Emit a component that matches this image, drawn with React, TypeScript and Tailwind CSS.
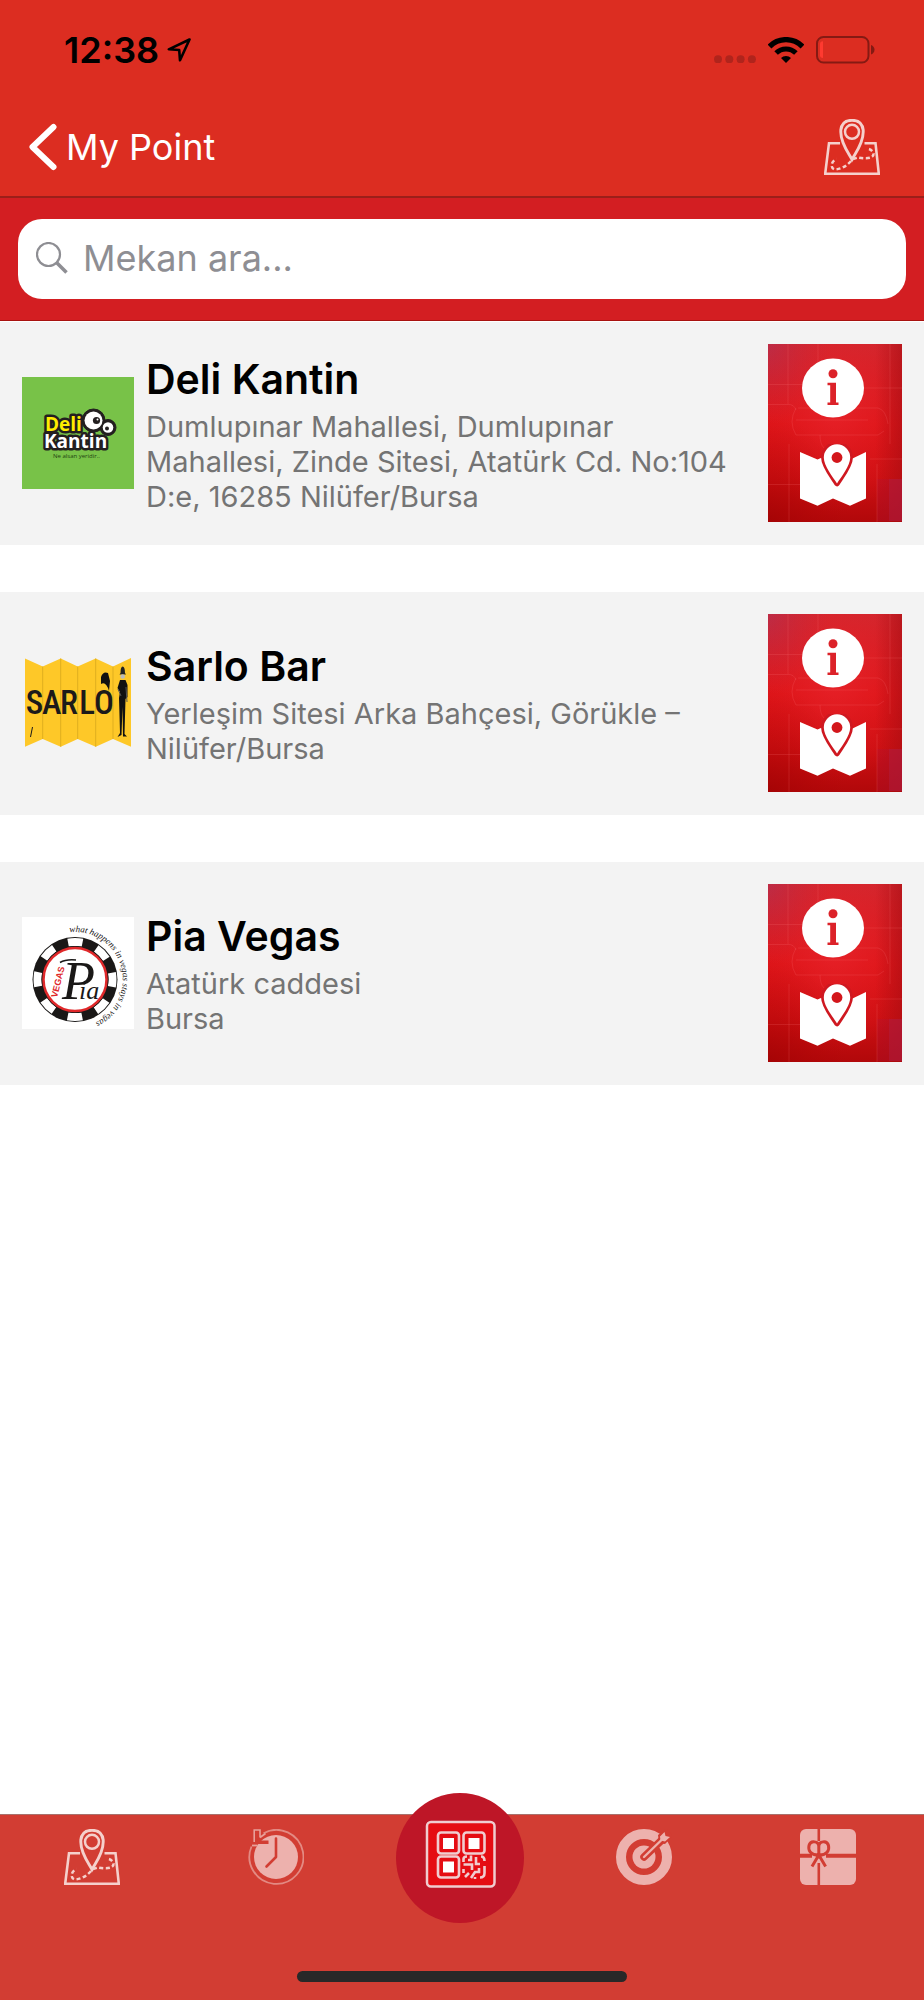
import React from "react";

function LocationArrow() {
  return (
    <svg className="h-6 w-6" viewBox="0 0 24 24" fill="none" stroke="#000" strokeWidth="2.6" strokeLinejoin="round" aria-hidden="true">
      <path d="M22.5 1.5 1.8 11.3 12.2 12 13 22.3Z" />
    </svg>
  );
}

function SignalDots() {
  return (
    <svg className="h-[26px] w-[42px]" viewBox="0 0 42 26" fill="#b0241c" aria-hidden="true">
      <circle cx="4" cy="22.3" r="4" />
      <circle cx="15.3" cy="22.3" r="4" />
      <circle cx="26.6" cy="22.3" r="4" />
      <circle cx="37.9" cy="22.3" r="4" />
    </svg>
  );
}

function Wifi() {
  return (
    <svg className="h-[26px] w-9" viewBox="0 0 36 26" fill="none" stroke="#000" aria-hidden="true">
      <path d="M1.5 9.5A23.3 23.3 0 0 1 34.5 9.5" strokeWidth="5.4" />
      <path d="M8.1 16.1A14 14 0 0 1 27.9 16.1" strokeWidth="5" />
      <path d="M18 26 13 21A7 7 0 0 1 23 21Z" fill="#000" stroke="none" />
    </svg>
  );
}

function Battery() {
  return (
    <svg className="h-7 w-[60px]" viewBox="0 0 60 28" aria-hidden="true">
      <rect x="1" y="1" width="51.5" height="25.5" rx="6.5" fill="none" stroke="#851a13" strokeWidth="2" />
      <path d="M4 8Q4 5.5 7 5.2V22Q4 21.7 4 19.5Z" fill="#ff3a30" />
      <path d="M55 9Q58.5 10.5 58.5 13.7T55 18.5Z" fill="#851a13" />
    </svg>
  );
}

function MapIcon() {
  return (
    <svg className="h-14 w-14" viewBox="0 0 56 56" fill="none" stroke="#f5d0cc" aria-hidden="true">
      <path d="M16 24.2H5L1.2 54.7H54.8L51.5 24.2H40.500" strokeWidth="2.6" />
      <path d="M28 40.500C24.500 34 16.800 24.500 16.800 13V11Q18 1.300 28 1.300T39.200 11V13C39.200 24.500 31.500 34 28 40.500Z" strokeWidth="2.900" />
      <circle cx="28" cy="12.800" r="7" strokeWidth="2.500" />
      <path d="M27 42C22 48 16 50 11.500 50.500C6 50 6.500 42.500 12.500 40" strokeWidth="2.500" strokeDasharray="4 2.500" />
      <path d="M29 40 34 38.500C40 39.500 50 40.500 49.500 34.500Q48 30 42.500 29.500" strokeWidth="2.500" strokeDasharray="4 2.500" />
    </svg>
  );
}

function HistoryIcon() {
  return (
    <svg className="h-14 w-14" viewBox="0 0 56 56" fill="none" aria-hidden="true">
      <circle cx="28" cy="28" r="22" fill="#edb1ad" />
      <path d="M15.500 4.200A27 27 0 1 1 3.500 17.500" stroke="#e38a83" strokeWidth="1.800" />
      <path d="M9 2V13.300H20.500" stroke="#d23d33" strokeWidth="3.600" />
      <path d="M9.500 13 17.500 5.500" stroke="#d23d33" strokeWidth="2.500" />
      <path d="M12 8.500V1H6.200V13M12 8.500 17.500 4.500" stroke="#e8a09a" strokeWidth="1.600" />
      <path d="M4 16.500H9.500" stroke="#e8a09a" strokeWidth="1.800" />
      <path d="M28 9.500V28L18.500 37.500" stroke="#d23d33" strokeWidth="2.600" strokeLinecap="round" strokeLinejoin="round" />
    </svg>
  );
}

function TargetIcon() {
  return (
    <svg className="h-14 w-14" viewBox="0 0 56 56" aria-hidden="true">
      <circle cx="28" cy="28" r="23" fill="none" stroke="#edb1ad" strokeWidth="10" />
      <circle cx="28" cy="28" r="11.500" fill="#edb1ad" />
      <path d="M28 28 49 8" stroke="#d23d33" strokeWidth="7.500" strokeLinecap="round" />
      <path d="M43 14 42 6 50 0 56 5 55 9 49 15Z" fill="#d23d33" />
      <path d="M28 28 46 10.500" stroke="#edb1ad" strokeWidth="2.400" strokeLinecap="round" />
      <path d="M44.500 11.500 44 7.500 48.500 3 49.500 7 54 8 49 12.500Z" fill="#edb1ad" />
    </svg>
  );
}

function GiftIcon() {
  return (
    <svg className="h-14 w-14" viewBox="0 0 56 56" fill="none" stroke="#d23d33" aria-hidden="true">
      <rect x="0" y="0" width="56" height="56" rx="6" fill="#edb1ad" stroke="none" />
      <path d="M18.800 0V12M18.800 34V56" strokeWidth="2.600" />
      <path d="M0 26.700H12M26 26.700H56" strokeWidth="4" />
      <path d="M18.800 26C10 26 8 21 9 16.500C10.500 11 18.800 12 18.800 17.500V26C27.500 26 29.500 21 28.500 16.500C27 11 18.800 12 18.800 17.500" strokeWidth="3" />
      <path d="M18.800 26 12 37.500M18.800 26 25.600 37.500" strokeWidth="3" />
      <circle cx="18.800" cy="27" r="2.500" fill="#d23d33" stroke="none" />
    </svg>
  );
}

function QrIcon() {
  return (
    <svg className="h-[130px] w-32" viewBox="0 0 128 130" fill="none" stroke="#f0cdd0" aria-hidden="true">
      <ellipse cx="64" cy="65" rx="64" ry="65" fill="#be1627" stroke="none" />
      <rect x="31" y="29" width="67.500" height="64.500" rx="4" fill="#e50d13" strokeWidth="2.500" />
      <rect x="42" y="39.500" width="21" height="21" rx="3" strokeWidth="2.600" />
      <rect x="67.500" y="39.500" width="21" height="21" rx="3" strokeWidth="2.600" />
      <rect x="42" y="63.500" width="21" height="21" rx="3" strokeWidth="2.600" />
      <g fill="#fff" stroke="none">
        <rect x="47" y="45" width="11" height="11" />
        <rect x="72.500" y="45" width="11" height="11" />
        <rect x="47" y="68.500" width="11" height="11" />
      </g>
      <path d="M67.500 69V66Q67.500 63.500 71 63.500M75 62.500V67H72M67.500 71.500H76V77M80 64V71H84M85 63.500Q88.500 63.500 88.500 68M88.500 73V80Q88.500 84.500 84 84.500M67.500 76V80M69 84 73 80M75 85 79 79H83V75M79 84V86" strokeWidth="2.600" />
    </svg>
  );
}

function DeliKantinLogo() {
  return (
    <svg className="h-28 w-28 shrink-0" viewBox="0 0 112 112" role="img" aria-label="Deli Kantin logo">
      <rect width="112" height="112" fill="#78c248" />
      <g fill="#231f20" stroke="#231f20">
        <circle cx="71.500" cy="43.500" r="11.500" />
        <circle cx="86" cy="50.500" r="8" />
      </g>
      <g className="font-['Open_Sans',sans-serif] text-[19px] font-bold" strokeWidth="5" stroke="#231f20" strokeLinejoin="round" paintOrder="stroke">
        <text x="22" y="71" fill="#fff">Kantin</text>
        <text x="23" y="54" fill="#ffed00">Deli</text>
      </g>
      <circle cx="71.500" cy="43.500" r="9" fill="#fff" />
      <circle cx="86" cy="50.500" r="5.300" fill="#fff" />
      <circle cx="74.500" cy="43.500" r="3.600" fill="#231f20" />
      <circle cx="75.500" cy="42.500" r="1" fill="#fff" />
      <circle cx="85" cy="51.500" r="2" fill="#231f20" />
      <text x="31" y="80.500" className="font-['Open_Sans',sans-serif] text-[6px]" fill="#234312">Ne alsan yeridir..</text>
    </svg>
  );
}

function SarloLogo() {
  return (
    <svg className="h-28 w-28 shrink-0" viewBox="0 0 112 112" role="img" aria-label="Sarlo Bar logo">
      <path d="M3 11.500 20.700 19.500 38.700 11.500 55.700 19.500 73.700 11.500 91 19.500 109 11V99.700L91 92 73.700 99.700 55.700 92 38.700 99.700 20.700 92 3 99.700Z" fill="#fec828" />
      <path d="M20.700 19.500V92M38.700 11.500V99.700M55.700 19.500V92M73.700 11.500V99.700M91 19.500V92" stroke="#dfae1f" strokeWidth="1" />
      <g className="font-['Roboto_Condensed','Liberation_Sans_Narrow','Liberation_Serif',serif] text-[33px] font-medium" fill="#1c1a1a" textAnchor="middle">
        <text x="12.500" y="67">S</text>
        <text x="29.700" y="67">A</text>
        <text x="47" y="67">R</text>
        <text x="65" y="67">L</text>
        <text x="82" y="67">O</text>
      </g>
      <path d="M8.500 90 10.500 80" stroke="#1c1a1a" strokeWidth="1" />
      <path d="M79 30Q81 24 86 26L88 34 87 44Q84 34 79 37Z" fill="#111" />
      <path d="M98.500 26Q98.500 19.500 100.700 19.500T103 26L104 27.500H97.500Z" fill="#222" />
      <circle cx="100.700" cy="29.500" r="2.300" fill="#bbb" />
      <path d="M98 33H103.500L105.500 38 105.500 50 103.500 52 102.500 87 105 89.500H101L100.500 60 99.500 88 95.500 90 98 86 97 51 98 45 95.500 41Z" fill="#111" />
      <path d="M104 40 105 55M96 42 99 49" stroke="#555" strokeWidth="1" />
    </svg>
  );
}

function PiaVegasLogo() {
  return (
    <svg className="h-28 w-28 shrink-0" viewBox="0 0 112 112" role="img" aria-label="Pia Vegas logo">
      <defs>
        <path id="pia-motto" d="M47.500 15.300A47.500 47.500 0 1 1 10 82" />
      </defs>
      <rect width="112" height="112" fill="#fff" />
      <circle cx="53" cy="62.500" r="42.500" fill="#1a1817" />
      <circle cx="53" cy="62.500" r="37.500" fill="none" stroke="#fff" strokeWidth="8" strokeDasharray="14.500 14.952" strokeDashoffset="7.250" />
      <circle cx="53" cy="62.500" r="32.500" fill="#fff" stroke="#1a1817" strokeWidth="2" />
      <circle cx="53" cy="62.500" r="31.500" fill="#fff" stroke="#e0282a" strokeWidth="2.500" />
      <text x="35" y="81" className="font-['Liberation_Sans',sans-serif] text-[9px] font-bold" fill="#e0282a" transform="rotate(-76 35 81)">VEGAS</text>
      <g className="font-['Liberation_Serif',serif] italic" fill="#1a1817">
        <text x="40" y="82" className="text-[54px]">P</text>
        <text x="57" y="82" className="text-[26px]">ia</text>
        <text className="text-[9px]">
          <textPath href="#pia-motto">what happens in vegas stays in vegas</textPath>
        </text>
      </g>
      <path d="M38 45.500Q44 42 54 43" stroke="#1a1817" strokeWidth="1.500" fill="none" />
    </svg>
  );
}

function TileBackground({ id }: { id: string }) {
  return (
    <svg className="absolute inset-0 h-full w-full" viewBox="0 0 134 178" preserveAspectRatio="none" aria-hidden="true">
      <defs>
        <linearGradient id={`${id}-base`} x1="0" y1="0" x2="0" y2="1">
          <stop offset="0" stopColor="#d2272f" />
          <stop offset="0.450" stopColor="#df1519" />
          <stop offset="0.750" stopColor="#cf1013" />
          <stop offset="1" stopColor="#b1080a" />
        </linearGradient>
        <radialGradient id={`${id}-glow`} cx="0.500" cy="0.350" r="0.600">
          <stop offset="0" stopColor="#ec2a33" stopOpacity="0.600" />
          <stop offset="1" stopColor="#e01a1e" stopOpacity="0" />
        </radialGradient>
        <radialGradient id={`${id}-violet`} cx="0" cy="0" r="0.450">
          <stop offset="0" stopColor="#a8305c" stopOpacity="0.500" />
          <stop offset="1" stopColor="#c02840" stopOpacity="0" />
        </radialGradient>
        <radialGradient id={`${id}-dark`} cx="0" cy="1" r="0.600">
          <stop offset="0" stopColor="#980000" stopOpacity="0.500" />
          <stop offset="1" stopColor="#b00000" stopOpacity="0" />
        </radialGradient>
        <linearGradient id={`${id}-edge`} x1="0" y1="0" x2="1" y2="0">
          <stop offset="0.800" stopColor="#a80d12" stopOpacity="0" />
          <stop offset="1" stopColor="#a80d12" stopOpacity="0.600" />
        </linearGradient>
      </defs>
      <rect width="134" height="178" fill={`url(#${id}-base)`} />
      <rect width="134" height="178" fill={`url(#${id}-glow)`} />
      <rect width="134" height="178" fill={`url(#${id}-violet)`} />
      <rect width="134" height="178" fill={`url(#${id}-dark)`} />
      <rect width="134" height="178" fill={`url(#${id}-edge)`} />
      <rect x="109" y="135" width="25" height="42" fill="#b0143a" fillOpacity="0.250" />
      <rect x="121" y="135" width="13" height="42" fill="#b02048" fillOpacity="0.400" />
      <path d="M0 40.500H34M20 0V60M50 0V20M0 60.500H20Q26 60 28 66M94 44H134M122 0V100M102 115H134M0 140.500H40M109 120V178M21 100V178M30 64H110Q118 66 120 80M28 64Q20 78 28 91H110L116 87M28 76H100M52 91Q52 100 56 104" fill="none" stroke="#ff7a80" strokeOpacity="0.180" strokeWidth="1" />
    </svg>
  );
}

function PlaceActions({ id, name }: { id: string; name: string }) {
  return (
    <div className="relative flex h-[178px] w-[134px] shrink-0 flex-col items-center justify-between pt-[14px] pr-1 pb-4">
      <TileBackground id={id} />
      <button type="button" aria-label={`${name} bilgi`} className="relative">
        <svg className="h-[60px] w-[62px]" viewBox="0 0 62 60" aria-hidden="true">
          <ellipse cx="31" cy="30" rx="31" ry="29.500" fill="#fff" />
          <circle cx="31" cy="15.800" r="4.500" fill="#dc2229" />
          <path d="M25.500 24.800H34V44.600H36.500V47H25.500V44.600H28.200V27.200H25.500Z" fill="#dc2229" />
        </svg>
      </button>
      <button type="button" aria-label={`${name} harita`} className="relative">
        <svg className="h-[62px] w-[66px]" viewBox="0 0 66 62" aria-hidden="true">
          <path d="M0 8 17.500 15.500 30 10H46L52.500 14.500 66 8V54.500L50 61.800 33 54.500 17.500 61.800 0 54.500Z" fill="#fff" />
          <path d="M37 39.500C33 33 23.800 22 23.800 13.500A13.200 13.200 0 0 1 50.200 13.500C50.200 22 41 33 37 39.500Z" fill="#fff" stroke="#cf1820" strokeWidth="5.500" strokeLinejoin="round" paintOrder="stroke" />
          <circle cx="37" cy="13.500" r="5.400" fill="#d3161b" />
        </svg>
      </button>
    </div>
  );
}

const places = [
  {
    id: "deli-kantin",
    name: "Deli Kantin",
    address: ["Dumlupınar Mahallesi, Dumlupınar Mahallesi, Zinde Sitesi, Atatürk Cd. No:104 D:e, 16285 Nilüfer/Bursa"],
    Logo: DeliKantinLogo,
  },
  {
    id: "sarlo-bar",
    name: "Sarlo Bar",
    address: ["Yerleşim Sitesi Arka Bahçesi, Görükle – Nilüfer/Bursa"],
    Logo: SarloLogo,
  },
  {
    id: "pia-vegas",
    name: "Pia Vegas",
    address: ["Atatürk caddesi", "Bursa"],
    Logo: PiaVegasLogo,
  },
];

export default function App() {
  return (
    <div className="flex min-h-screen flex-col bg-white font-['Inter','Noto_Sans',sans-serif]">
      <header className="border-b-2 border-[#9c1f19] bg-[#dc2d21]">
        <div className="flex h-[100px] items-center justify-between pr-12 pl-16">
          <div className="flex items-center gap-2">
            <span className="text-[36px] leading-10 font-semibold text-black">12:38</span>
            <LocationArrow />
          </div>
          <div className="flex items-center gap-3">
            <SignalDots />
            <Wifi />
            <Battery />
          </div>
        </div>
        <div className="flex h-24 items-center justify-between pr-11 pb-0.5 pl-7">
          <a href="#" className="flex items-center gap-2 text-white">
            <svg className="h-12 w-[30px]" viewBox="0 0 30 48" fill="none" stroke="#fff" strokeWidth="6" strokeLinecap="round" strokeLinejoin="round" aria-hidden="true">
              <path d="M25.500 4 4.500 24 25.500 44" />
            </svg>
            <span className="text-[36px] leading-10">My Point</span>
          </a>
          <button type="button" aria-label="Harita">
            <MapIcon />
          </button>
        </div>
      </header>

      <form role="search" className="border-b border-[#a8120f] bg-[#d31e22] px-[18px] py-[21px]" onSubmit={(e) => e.preventDefault()}>
        <div className="flex h-20 items-center gap-[15px] rounded-3xl bg-white px-[18px] pb-0.5">
          <label htmlFor="place-search" aria-label="Mekan ara">
            <svg className="h-8 w-8 shrink-0" viewBox="0 0 32 32" fill="none" stroke="#8e8e93" aria-hidden="true">
              <circle cx="12.500" cy="12.500" r="11.500" strokeWidth="2.200" />
              <path d="M20.500 20.500 30.500 30.500" strokeWidth="3.600" />
            </svg>
          </label>
          <input
            id="place-search"
            type="search"
            placeholder="Mekan ara..."
            className="w-full min-w-0 bg-transparent text-[36px] leading-[44px] text-black outline-none placeholder:text-[#8e8e93] placeholder:opacity-100"
          />
        </div>
      </form>

      <main className="flex-1 pt-px">
        <ul className="flex flex-col gap-[47px]">
          {places.map(({ id, name, address, Logo }) => (
            <li key={id} className="flex min-h-[223px] items-center bg-[#f3f3f3] px-[22px] pb-px">
              <Logo />
              <div className="ml-3 min-w-0 flex-1 pr-8">
                <h2 className="mb-1 text-[41px] leading-[52px] font-semibold text-black">{name}</h2>
                {address.map((line) => (
                  <p key={line} className="text-[29px] leading-[35px] text-[#747474]">{line}</p>
                ))}
              </div>
              <PlaceActions id={id} name={name} />
            </li>
          ))}
        </ul>
      </main>

      <footer className="border-t border-[#a8716c] bg-[#d23d33]">
        <nav className="grid h-[156px] grid-cols-5 justify-items-center pt-[14px] pr-1">
          <a href="#" aria-label="Mekanlar" className="h-14"><MapIcon /></a>
          <a href="#" aria-label="Geçmiş" className="h-14"><HistoryIcon /></a>
          <a href="#" aria-label="QR kod" className="-mt-9"><QrIcon /></a>
          <a href="#" aria-label="Hedefler" className="h-14"><TargetIcon /></a>
          <a href="#" aria-label="Hediyeler" className="h-14"><GiftIcon /></a>
        </nav>
        <div className="mx-auto mb-[18px] h-[11px] w-[330px] rounded-full bg-[#282828]" />
      </footer>
    </div>
  );
}
